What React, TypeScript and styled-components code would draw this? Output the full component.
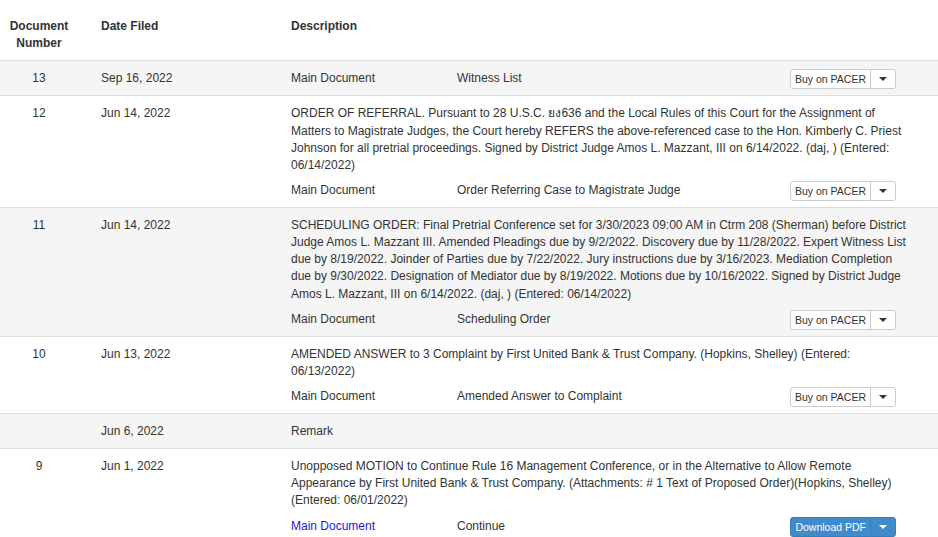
import React from "react";
import styled, { createGlobalStyle } from "styled-components";

const GlobalStyle = createGlobalStyle`
  html, body { margin: 0; padding: 0; background: #fff; }
  body {
    font-family: "Liberation Sans", Arial, "Noto Sans", sans-serif;
    font-size: 12px;
    line-height: 1.42857;
    color: #333;
  }
  * { box-sizing: border-box; }
`;

const Table = styled.div`
  width: 938px;
`;

const HeaderRow = styled.div`
  display: grid;
  grid-template-columns: 93px 190px 1fr;
  border-bottom: 1px solid #ddd;
  font-weight: bold;
`;

const HeaderCell = styled.div<{ $center?: boolean }>`
  padding: 18px ${(p) => (p.$center ? "23px" : "8px")} 8px 8px;
  text-align: ${(p) => (p.$center ? "center" : "left")};
`;

const Row = styled.div<{ $striped: boolean }>`
  display: grid;
  grid-template-columns: 93px 190px 1fr;
  border-bottom: 1px solid #ddd;
  background: ${(p) => (p.$striped ? "#f5f5f5" : "#fff")};
`;

const NumCell = styled.div`
  padding: 9px 23px 8px 8px;
  text-align: center;
`;

const DateCell = styled.div`
  padding: 9px 8px 8px;
`;

const DescCell = styled.div`
  padding: 8px 26px 6px 8px;
`;

const DescText = styled.div`
  padding-top: 1px;
  margin-bottom: 7px;
`;

const PlainText = styled.div`
  padding-top: 1px;
  padding-bottom: 2px;
`;

const SubRow = styled.div`
  display: grid;
  grid-template-columns: 166px 1fr auto;
  align-items: start;
  padding-right: 16px;
`;

const SubText = styled.span`
  padding-top: 1px;
`;

const DocLink = styled.a`
  padding-top: 1px;
  color: #1a1acb;
  text-decoration: none;
  cursor: pointer;
`;

const BtnGroup = styled.div`
  display: inline-flex;
  height: 20px;
`;

const Btn = styled.button<{ $primary?: boolean }>`
  font-family: "Liberation Sans", Arial, sans-serif;
  font-size: 10.5px;
  line-height: 18px;
  height: 20px;
  padding: 0 4px;
  margin: 0;
  border: 1px solid ${(p) => (p.$primary ? "#357ebd" : "#ccc")};
  background: ${(p) => (p.$primary ? "#428bca" : "#fff")};
  color: ${(p) => (p.$primary ? "#fff" : "#333")};
  border-radius: 3px 0 0 3px;
  white-space: nowrap;
`;

const CaretBtn = styled(Btn)`
  width: 26px;
  margin-left: -1px;
  border-radius: 0 3px 3px 0;
  display: flex;
  align-items: center;
  justify-content: center;
`;

const Caret = styled.span<{ $primary?: boolean }>`
  width: 0;
  height: 0;
  border-top: 4px solid ${(p) => (p.$primary ? "#fff" : "#333")};
  border-left: 4px solid transparent;
  border-right: 4px solid transparent;
`;

type Entry = {
  num?: string;
  date: string;
  text?: string;
  remark?: string;
  doc?: string;
  link?: boolean;
  download?: boolean;
};

const entries: Entry[] = [
  { num: "13", date: "Sep 16, 2022", doc: "Witness List" },
  {
    num: "12",
    date: "Jun 14, 2022",
    text:
      "ORDER OF REFERRAL. Pursuant to 28 U.S.C. ยง636 and the Local Rules of this Court for the Assignment of Matters to Magistrate Judges, the Court hereby REFERS the above-referenced case to the Hon. Kimberly C. Priest Johnson for all pretrial proceedings. Signed by District Judge Amos L. Mazzant, III on 6/14/2022. (daj, ) (Entered: 06/14/2022)",
    doc: "Order Referring Case to Magistrate Judge",
  },
  {
    num: "11",
    date: "Jun 14, 2022",
    text:
      "SCHEDULING ORDER: Final Pretrial Conference set for 3/30/2023 09:00 AM in Ctrm 208 (Sherman) before District Judge Amos L. Mazzant III. Amended Pleadings due by 9/2/2022. Discovery due by 11/28/2022. Expert Witness List due by 8/19/2022. Joinder of Parties due by 7/22/2022. Jury instructions due by 3/16/2023. Mediation Completion due by 9/30/2022. Designation of Mediator due by 8/19/2022. Motions due by 10/16/2022. Signed by District Judge Amos L. Mazzant, III on 6/14/2022. (daj, ) (Entered: 06/14/2022)",
    doc: "Scheduling Order",
  },
  {
    num: "10",
    date: "Jun 13, 2022",
    text:
      "AMENDED ANSWER to 3 Complaint by First United Bank & Trust Company. (Hopkins, Shelley) (Entered: 06/13/2022)",
    doc: "Amended Answer to Complaint",
  },
  { date: "Jun 6, 2022", remark: "Remark" },
  {
    num: "9",
    date: "Jun 1, 2022",
    text:
      "Unopposed MOTION to Continue Rule 16 Management Conference, or in the Alternative to Allow Remote Appearance by First United Bank & Trust Company. (Attachments: # 1 Text of Proposed Order)(Hopkins, Shelley) (Entered: 06/01/2022)",
    doc: "Continue",
    link: true,
    download: true,
  },
];

export default function App() {
  return (
    <>
      <GlobalStyle />
      <Table>
        <HeaderRow>
          <HeaderCell $center>Document Number</HeaderCell>
          <HeaderCell>Date Filed</HeaderCell>
          <HeaderCell>Description</HeaderCell>
        </HeaderRow>
        {entries.map((e, i) => (
          <Row key={i} $striped={i % 2 === 0}>
            <NumCell>{e.num ?? ""}</NumCell>
            <DateCell>{e.date}</DateCell>
            <DescCell>
              {e.remark ? (
                <PlainText>{e.remark}</PlainText>
              ) : (
                <>
                  {e.text && <DescText>{e.text}</DescText>}
                  <SubRow>
                    {e.link ? <DocLink>Main Document</DocLink> : <SubText>Main Document</SubText>}
                    <SubText>{e.doc}</SubText>
                    <BtnGroup>
                      <Btn $primary={e.download}>{e.download ? "Download PDF" : "Buy on PACER"}</Btn>
                      <CaretBtn $primary={e.download}>
                        <Caret $primary={e.download} />
                      </CaretBtn>
                    </BtnGroup>
                  </SubRow>
                </>
              )}
            </DescCell>
          </Row>
        ))}
      </Table>
    </>
  );
}
